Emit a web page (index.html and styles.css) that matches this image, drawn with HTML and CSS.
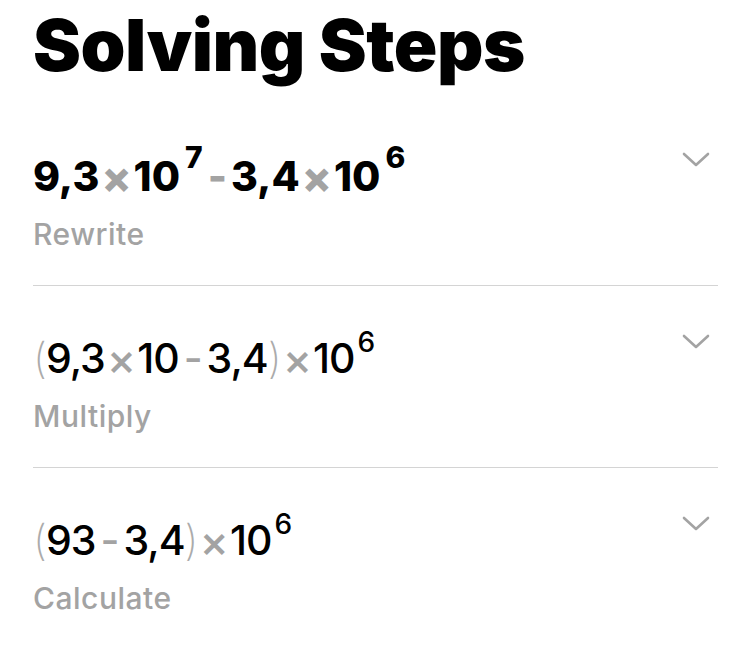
FILE: index.html
```html
<!DOCTYPE html>
<html>
<head>
<meta charset="utf-8">
<link rel="stylesheet" href="styles.css">
</head>
<body>
<h1 class="title">Solving Steps</h1>
<ul class="steps">
  <li class="step">
    <div class="step-text">
      <div class="expr expr-bold">9,3<span class="op times">×</span>10<sup class="exp">7</sup><span class="op minus">-</span>3,4<span class="op times">×</span>10<sup class="exp">6</sup></div>
      <div class="label">Rewrite</div>
    </div>
    <svg class="chevron" width="28" height="16" viewBox="0 0 28 16"><path d="M2 2 L14 13 L26 2" fill="none" stroke="#a3a3a3" stroke-width="2.6" stroke-linecap="round" stroke-linejoin="round"/></svg>
  </li>
  <li class="step">
    <div class="step-text">
      <div class="expr"><span class="paren">(</span>9,3<span class="op times">×</span>10<span class="op minus">-</span>3,4<span class="paren">)</span><span class="op times">×</span>10<sup class="exp">6</sup></div>
      <div class="label">Multiply</div>
    </div>
    <svg class="chevron" width="28" height="16" viewBox="0 0 28 16"><path d="M2 2 L14 13 L26 2" fill="none" stroke="#a3a3a3" stroke-width="2.6" stroke-linecap="round" stroke-linejoin="round"/></svg>
  </li>
  <li class="step">
    <div class="step-text">
      <div class="expr"><span class="paren">(</span>93<span class="op minus">-</span>3,4<span class="paren">)</span><span class="op times">×</span>10<sup class="exp">6</sup></div>
      <div class="label">Calculate</div>
    </div>
    <svg class="chevron" width="28" height="16" viewBox="0 0 28 16"><path d="M2 2 L14 13 L26 2" fill="none" stroke="#a3a3a3" stroke-width="2.6" stroke-linecap="round" stroke-linejoin="round"/></svg>
  </li>
</ul>
</body>
</html>
```
FILE: styles.css
```css
* { box-sizing: border-box; }
html, body { margin: 0; padding: 0; background: #fff; }
body {
  font-family: Inter, "Noto Sans", "Liberation Sans", sans-serif;
  color: #000;
  padding: 0 32px 0 33px;
}
.title {
  margin: 0 0 16px;
  padding-top: 2px;
  font-size: 72px;
  font-weight: 900;
  line-height: 86px;
  letter-spacing: -0.5px;
}
.steps {
  list-style: none;
  margin: 0;
  padding: 0;
}
.step {
  display: flex;
  justify-content: space-between;
  align-items: flex-start;
  height: 182px;
  border-bottom: 1.5px solid #d4d4d4;
  padding-top: 48px;
}
.step:last-child { border-bottom: none; }
.expr {
  font-size: 41px;
  font-weight: 500;
  line-height: 48px;
  letter-spacing: -1px;
  white-space: nowrap;
}
.expr-bold { font-weight: 800; letter-spacing: 0; }
.op {
  color: #a3a3a3;
  font-weight: 500;
  line-height: 0;
}
.expr-bold .op { font-weight: 800; }
.times {
  font-size: 44px;
  margin: 0 2px;
  vertical-align: -2px;
}
.minus { margin: 0 5px; }
.expr-bold .minus { margin: 0 4px 0 5px; }
.paren {
  color: #ababab;
  font-weight: 200;
  font-size: 42px;
}
.exp {
  font-size: 28px;
  vertical-align: 21px;
  line-height: 0;
  margin-left: 3px;
}
.expr-bold .exp { font-size: 30px; vertical-align: 23px; margin-left: 5px; }
.label {
  margin-top: 16px;
  font-size: 30px;
  font-weight: 500;
  color: #a3a3a3;
  line-height: 36px;
  letter-spacing: 0.5px;
}
.chevron {
  margin-top: 0;
  margin-right: 8px;
  flex-shrink: 0;
}
```
